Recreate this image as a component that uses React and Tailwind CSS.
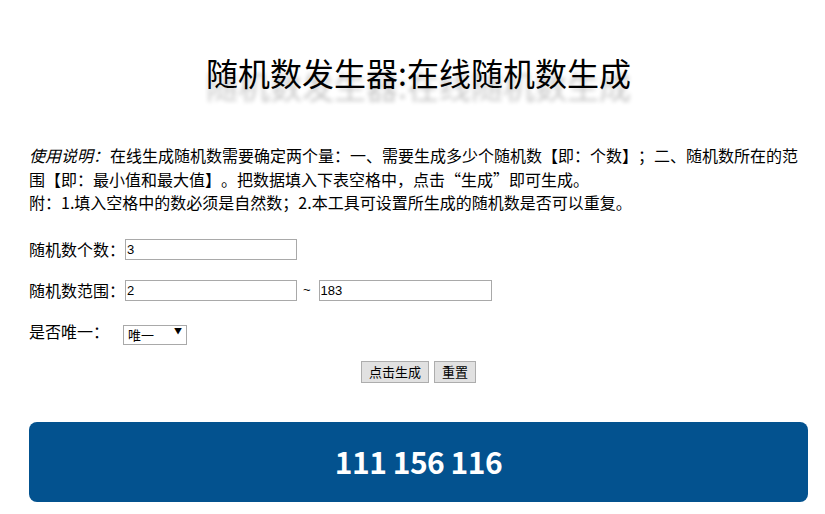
import React, { useState } from 'react';

const font = { fontFamily: '"Noto Sans CJK SC", "Noto Sans", sans-serif' };
const arial = { fontFamily: '"Liberation Sans", Arial, sans-serif' };

export default function App() {
  const [count, setCount] = useState('3');
  const [min, setMin] = useState('2');
  const [max, setMax] = useState('183');
  const [unique, setUnique] = useState('1');

  return (
    <div className="min-h-[514px] bg-white text-black pl-[29px] pr-[17px] [text-spacing-trim:space-all]" style={font}>
      <h1 className="pt-[50px] text-center text-[32px] leading-[44px] font-normal [text-shadow:0_13px_4px_rgba(0,0,0,0.22)]">
        随机数发生器:在线随机数生成
      </h1>

      <div className="mt-[50px] text-[16px] leading-[23.5px]">
        <p>
          <i className="pr-[1px]">使用说明：</i>在线生成随机数需要确定两个量：一、需要生成多少个随机数【即：个数】；二、随机数所在的范围【即：最小值和最大值】。把数据填入下表空格中，点击“生成”即可生成。
        </p>
        <p>附：1.填入空格中的数必须是自然数；2.本工具可设置所生成的随机数是否可以重复。</p>
      </div>

      <div className="mt-[24px] flex flex-col gap-[20px] text-[16px]">
        <div className="flex items-center h-[21px]">
          <span>随机数个数：</span>
          <input
            value={count}
            onChange={(e) => setCount(e.target.value)}
            className="w-[172px] h-[21px] border border-[#a9a9a9] px-[1px] text-[13px] outline-none"
            style={arial}
          />
        </div>

        <div className="flex items-center h-[21px]">
          <span>随机数范围：</span>
          <input
            value={min}
            onChange={(e) => setMin(e.target.value)}
            className="w-[172px] h-[21px] border border-[#a9a9a9] px-[1px] text-[13px] outline-none"
            style={arial}
          />
          <span className="ml-[6px] mr-[8px] text-[13px]" style={arial}>~</span>
          <input
            value={max}
            onChange={(e) => setMax(e.target.value)}
            className="w-[173px] h-[21px] border border-[#a9a9a9] px-[1px] text-[13px] outline-none"
            style={arial}
          />
        </div>

        <div className="flex items-center h-[20px]">
          <span>是否唯一：</span>
          <div className="relative ml-[14px] w-[64px] h-[20px]">
            <select
              value={unique}
              onChange={(e) => setUnique(e.target.value)}
              className="appearance-none w-full h-full border border-[#a9a9a9] bg-white pl-[4px] text-[13px] leading-[18px] outline-none"
            >
              <option value="1">唯一</option>
              <option value="0">可重复</option>
            </select>
            <span className="pointer-events-none absolute right-[5px] top-[5px] text-[8px] leading-[10px]">▼</span>
          </div>
        </div>
      </div>

      <div className="mt-[20px] flex justify-center gap-[5px]">
        <button className="h-[22px] px-[7px] border border-[#adadad] bg-[#e1e1e1] text-[13px] leading-[20px] hover:bg-[#e5f1fb]">
          点击生成
        </button>
        <button className="h-[22px] px-[7px] border border-[#adadad] bg-[#e1e1e1] text-[13px] leading-[20px] hover:bg-[#e5f1fb]">
          重置
        </button>
      </div>

      <div className="mt-[39px] h-[80px] rounded-[8px] bg-[#03528f] flex items-center justify-center">
        <span className="text-white text-[30px] font-bold tracking-[-0.5px]">111 156 116</span>
      </div>
    </div>
  );
}
